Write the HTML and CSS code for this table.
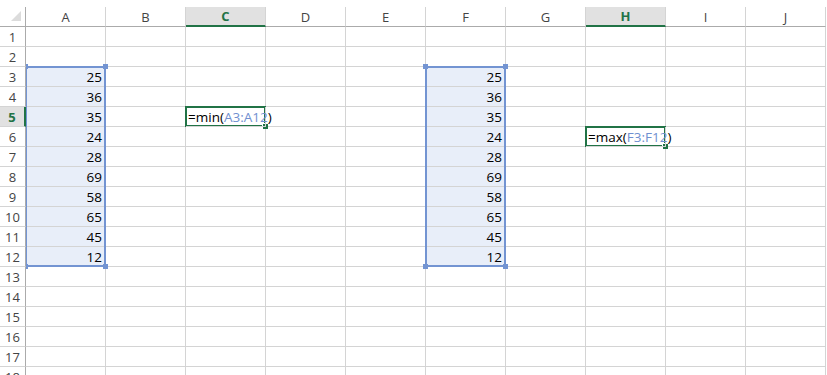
FILE: index.html
```html
<!DOCTYPE html>
<html lang="en">
<head>
  <meta charset="UTF-8" />
  <title>Book1 - min / max</title>
  <link rel="stylesheet" href="styles.css">
</head>
<body>

<div class="sheet" id="sheet">
  <!-- header + cells get filled in by the script below -->

  <!-- reference ranges picked up by the formulas -->
  <div class="range range-a">
    <i class="handle tl"></i><i class="handle tr"></i><i class="handle bl"></i><i class="handle br"></i>
  </div>
  <div class="range range-f">
    <i class="handle tl"></i><i class="handle tr"></i><i class="handle bl"></i><i class="handle br"></i>
  </div>

  <!-- cells being edited -->
  <div class="active active-c5"><i class="fill-handle"></i></div>
  <div class="active active-h6"><i class="fill-handle"></i></div>
</div>

<script>
  const columns = ["A", "B", "C", "D", "E", "F", "G", "H", "I", "J"];
  const rowCount = 18;
  const numbers = [25, 36, 35, 24, 28, 69, 58, 65, 45, 12];

  // cell contents, keyed by address
  const cells = {
    C5: '=min(<span class="ref">A3:A12</span>)',
    H6: '=max(<span class="ref">F3:F12</span>)'
  };
  numbers.forEach((n, i) => {
    cells["A" + (i + 3)] = n;
    cells["F" + (i + 3)] = n;
  });

  const selectedCols = ["C", "H"];
  const selectedRow = 5;
  const inRange = (col, row) => (col === "A" || col === "F") && row >= 3 && row <= 12;

  const sheet = document.getElementById("sheet");
  const firstOverlay = sheet.querySelector(".range");

  function place(el, row, col) {
    el.style.gridRow = row;
    el.style.gridColumn = col;
    sheet.insertBefore(el, firstOverlay);
  }

  // corner + column letters
  const corner = document.createElement("div");
  corner.className = "corner";
  corner.innerHTML = '<span class="select-all"></span>';
  place(corner, 1, 1);

  columns.forEach((c, i) => {
    const head = document.createElement("div");
    head.className = "colhead" + (selectedCols.includes(c) ? " selected" : "");
    head.textContent = c;
    place(head, 1, i + 2);
  });

  for (let r = 1; r <= rowCount; r++) {
    const head = document.createElement("div");
    head.className = "rowhead" + (r === selectedRow ? " selected" : "");
    head.textContent = r;
    place(head, r + 1, 1);

    columns.forEach((c, i) => {
      const cell = document.createElement("div");
      const value = cells[c + r];
      cell.className = "cell";
      if (typeof value === "number") cell.classList.add("num");
      if (typeof value === "string") cell.classList.add("formula");
      if (inRange(c, r)) cell.classList.add("in-range");
      if (value !== undefined) cell.innerHTML = value;
      place(cell, r + 1, i + 2);
    });
  }
</script>

</body>
</html>
```

FILE: styles.css
```css
* {
  box-sizing: border-box;
}

html, body {
  height: 375px;
}

body {
  margin: 0;
  padding-top: 7px;
  background: #fff;
  font-family: 'Open Sans', 'Liberation Sans', sans-serif;
  color: #000;
  overflow: hidden;
}

.sheet {
  display: grid;
  grid-template-columns: 26px repeat(10, 80px);
  grid-auto-rows: 20px;
}

/* headers */
.corner, .colhead, .rowhead {
  background: #fff;
  color: #444;
  font-size: 13px;
}

.corner {
  display: flex;
  justify-content: flex-end;
  align-items: flex-end;
  padding: 0 4px 5px 0;
  border-right: 1px solid #ababab;
  border-bottom: 1px solid #ababab;
}

.select-all {
  width: 0;
  height: 0;
  border-left: 10px solid transparent;
  border-bottom: 10px solid #dcdcdc;
}

.colhead {
  display: flex;
  align-items: center;
  justify-content: center;
  border-right: 1px solid #d4d4d4;
  border-bottom: 1px solid #ababab;
}
.colhead.selected {
  background: #e1e1e1;
  border-bottom: 2px solid #217346;
  color: #217346;
  font-weight: 700;
}

.rowhead {
  position: relative;
  z-index: 2;
  display: flex;
  align-items: center;
  justify-content: center;
  padding-top: 1px;
  border-right: 1px solid #ababab;
  border-bottom: 1px solid #d4d4d4;
}
.rowhead.selected {
  background: #e1e1e1;
  border-right: 2px solid #217346;
  color: #217346;
  font-weight: 700;
}

/* cells */
.cell {
  display: flex;
  align-items: center;
  padding: 1px 3px 0 2px;
  font-size: 13.5px;
  white-space: nowrap;
  border-right: 1px solid #d4d4d4;
  border-bottom: 1px solid #d4d4d4;
}
.cell.num {
  justify-content: flex-end;
}
.cell.in-range {
  background: #e8eef9;
}
/* text being typed sits above the cell outline */
.cell.formula {
  position: relative;
  z-index: 2;
}

.ref {
  color: #6f8fd0;
}

/* formula reference outlines */
.range {
  position: relative;
  z-index: 1;
  margin: -1px 0 0 -1px;
  border: 2px solid #7394d2;
  pointer-events: none;
}
.range-a {
  grid-column: 2;
  grid-row: 4 / 14;
}
.range-f {
  grid-column: 7;
  grid-row: 4 / 14;
}

.handle {
  position: absolute;
  width: 5px;
  height: 5px;
  background: #7394d2;
}
.handle.tl { top: -4px; left: -4px; }
.handle.tr { top: -4px; right: -4px; }
.handle.bl { bottom: -4px; left: -4px; }
.handle.br { bottom: -4px; right: -4px; }

/* active cell */
.active {
  position: relative;
  z-index: 1;
  margin: -1px 0 0 -1px;
  border: 2px solid #217346;
  pointer-events: none;
}
.active-c5 {
  grid-column: 4;
  grid-row: 6;
}
.active-h6 {
  grid-column: 9;
  grid-row: 7;
}

.fill-handle {
  position: absolute;
  right: -4px;
  bottom: -4px;
  width: 6px;
  height: 6px;
  background: #217346;
  border-left: 1px solid #fff;
  border-top: 1px solid #fff;
}
```
